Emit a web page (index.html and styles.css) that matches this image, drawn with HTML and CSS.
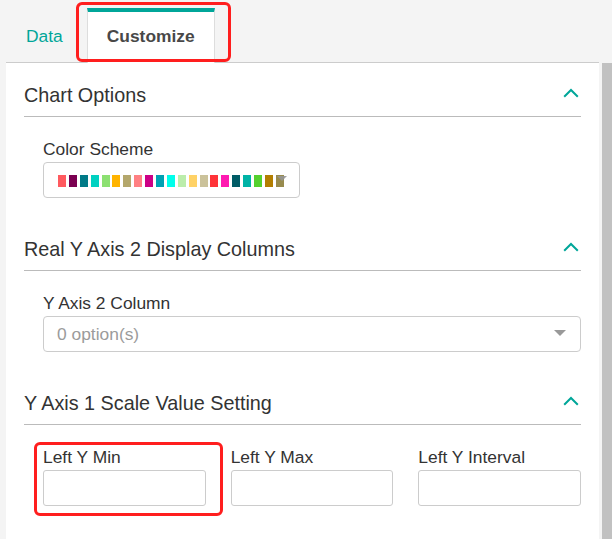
FILE: index.html
```html
<!DOCTYPE html>
<html lang="en">
<head>
<meta charset="utf-8">
<title>Customize</title>
<link rel="stylesheet" href="styles.css">
</head>
<body>
<div class="tabbar">
  <div class="tab">Data</div>
  <div class="tab tab-active">Customize</div>
</div>
<div class="main">
  <div class="panel">
    <section class="section">
      <div class="sec-head">
        <h2 class="sec-title">Chart Options</h2>
        <svg class="chev" width="16" height="10" viewBox="0 0 16 10"><polyline points="1.2,8.8 8,2 14.8,8.8" fill="none" stroke="#00a699" stroke-width="2"/></svg>
      </div>
      <div class="sec-body">
        <div class="label">Color Scheme</div>
        <div class="color-select">
          <div class="swatches">
            <span class="sw" style="background:#ff5a5f"></span>
            <span class="sw" style="background:#7b0051"></span>
            <span class="sw" style="background:#007a87"></span>
            <span class="sw" style="background:#00d1c1"></span>
            <span class="sw" style="background:#8ce071"></span>
            <span class="sw" style="background:#ffb400"></span>
            <span class="sw" style="background:#b4a76c"></span>
            <span class="sw" style="background:#ff8083"></span>
            <span class="sw" style="background:#cc0086"></span>
            <span class="sw" style="background:#00a1b3"></span>
            <span class="sw" style="background:#00ffeb"></span>
            <span class="sw" style="background:#bbedab"></span>
            <span class="sw" style="background:#ffd266"></span>
            <span class="sw" style="background:#cbc29a"></span>
            <span class="sw" style="background:#ff3339"></span>
            <span class="sw" style="background:#ff1ab1"></span>
            <span class="sw" style="background:#005c66"></span>
            <span class="sw" style="background:#00b3a6"></span>
            <span class="sw" style="background:#55d12e"></span>
            <span class="sw" style="background:#b37e00"></span>
            <span class="sw" style="background:#988b4e"></span>
          </div>
          <span class="caret caret-small"></span>
        </div>
      </div>
    </section>
    <section class="section">
      <div class="sec-head">
        <h2 class="sec-title">Real Y Axis 2 Display Columns</h2>
        <svg class="chev" width="16" height="10" viewBox="0 0 16 10"><polyline points="1.2,8.8 8,2 14.8,8.8" fill="none" stroke="#00a699" stroke-width="2"/></svg>
      </div>
      <div class="sec-body">
        <div class="label">Y Axis 2 Column</div>
        <div class="select">
          <span class="placeholder">0 option(s)</span>
          <span class="caret"></span>
        </div>
      </div>
    </section>
    <section class="section">
      <div class="sec-head">
        <h2 class="sec-title">Y Axis 1 Scale Value Setting</h2>
        <svg class="chev" width="16" height="10" viewBox="0 0 16 10"><polyline points="1.2,8.8 8,2 14.8,8.8" fill="none" stroke="#00a699" stroke-width="2"/></svg>
      </div>
      <div class="sec-body grid3">
        <div class="field">
          <div class="label">Left Y Min</div>
          <div class="input"></div>
        </div>
        <div class="field">
          <div class="label">Left Y Max</div>
          <div class="input"></div>
        </div>
        <div class="field">
          <div class="label">Left Y Interval</div>
          <div class="input"></div>
        </div>
      </div>
    </section>
  </div>
  <div class="gutter"></div>
  <div class="scrollbar"></div>
</div>
<div class="mark mark-tab"></div>
<div class="mark mark-field"></div>
</body>
</html>
```

FILE: styles.css
```css
html, body {
  margin: 0;
  padding: 0;
}
body {
  background: #f4f4f4;
  font-family: "Liberation Sans", Arial, sans-serif;
  color: #333;
  width: 612px;
  height: 539px;
  overflow: hidden;
  position: relative;
}
.tabbar {
  display: flex;
  align-items: flex-end;
  height: 62px;
  margin-left: 6px;
  width: 593px;
  border-bottom: 1px solid #cccccc;
}
.tab {
  font-size: 17.4px;
  line-height: 20px;
  padding: 13.5px 19px 17.5px;
  border: 1px solid transparent;
  border-top: 4px solid transparent;
  border-bottom: 0;
  color: #00a699;
  margin-right: 4px;
  margin-bottom: -1px;
  white-space: nowrap;
}
.tab-active {
  background: #fff;
  border-color: #dddddd;
  border-top-color: #00a699;
  color: #484848;
  font-weight: bold;
}
.main {
  display: flex;
  margin-left: 6px;
  height: 476px;
}
.panel {
  width: 593px;
  background: #fff;
  flex: none;
}
.gutter {
  width: 3px;
  flex: none;
}
.scrollbar {
  width: 10px;
  background: #c1c1c1;
  flex: none;
}
.section {
  padding: 20px 18px 19px 18px;
}
.sec-head {
  display: flex;
  justify-content: space-between;
  align-items: center;
  height: 24px;
  padding-bottom: 9px;
  border-bottom: 1px solid #bbbbbb;
}
.sec-title {
  margin: 0;
  font-weight: normal;
  font-size: 19.8px;
  line-height: 24px;
  color: #333;
}
.chev {
  display: block;
  margin-right: 2px;
  margin-bottom: 5px;
}
.sec-body {
  padding: 22px 0 0 19px;
}
.label {
  font-size: 17.4px;
  line-height: 20px;
  color: #333;
  margin-bottom: 3px;
  white-space: nowrap;
}
.color-select {
  position: relative;
  width: 253px;
  height: 34px;
  border: 1px solid #cccccc;
  border-radius: 4px;
  display: flex;
  align-items: center;
  padding-left: 14px;
  box-sizing: content-box;
  width: 241px;
}
.swatches {
  display: flex;
  gap: 2.9px;
  margin-top: 1px;
}
.sw {
  display: block;
  width: 8px;
  height: 12px;
}
.caret {
  position: absolute;
  right: 14px;
  top: 13px;
  width: 0;
  height: 0;
  border-left: 6px solid transparent;
  border-right: 6px solid transparent;
  border-top: 6px solid #999;
}
.caret-small {
  right: 12px;
  top: 13px;
  border-left-width: 5.5px;
  border-right-width: 5.5px;
  border-top: 5px solid rgba(150, 150, 150, 0.9);
}
.select {
  position: relative;
  height: 34px;
  border: 1px solid #cccccc;
  border-radius: 4px;
  display: flex;
  align-items: center;
  padding-left: 13px;
}
.placeholder {
  font-size: 17.4px;
  color: #9b9b9b;
  line-height: 20px;
}
.grid3 {
  display: grid;
  grid-template-columns: 1fr 1fr 1fr;
  column-gap: 25px;
}
.input {
  height: 34px;
  border: 1px solid #cccccc;
  border-radius: 3px;
  background: #fff;
}
.mark {
  position: absolute;
  border: 3px solid #ff1e1e;
  border-radius: 6px;
  box-sizing: border-box;
}
.mark-tab {
  left: 76px;
  top: 2px;
  width: 155px;
  height: 60px;
}
.mark-field {
  left: 34px;
  top: 442px;
  width: 189px;
  height: 74px;
}
```
